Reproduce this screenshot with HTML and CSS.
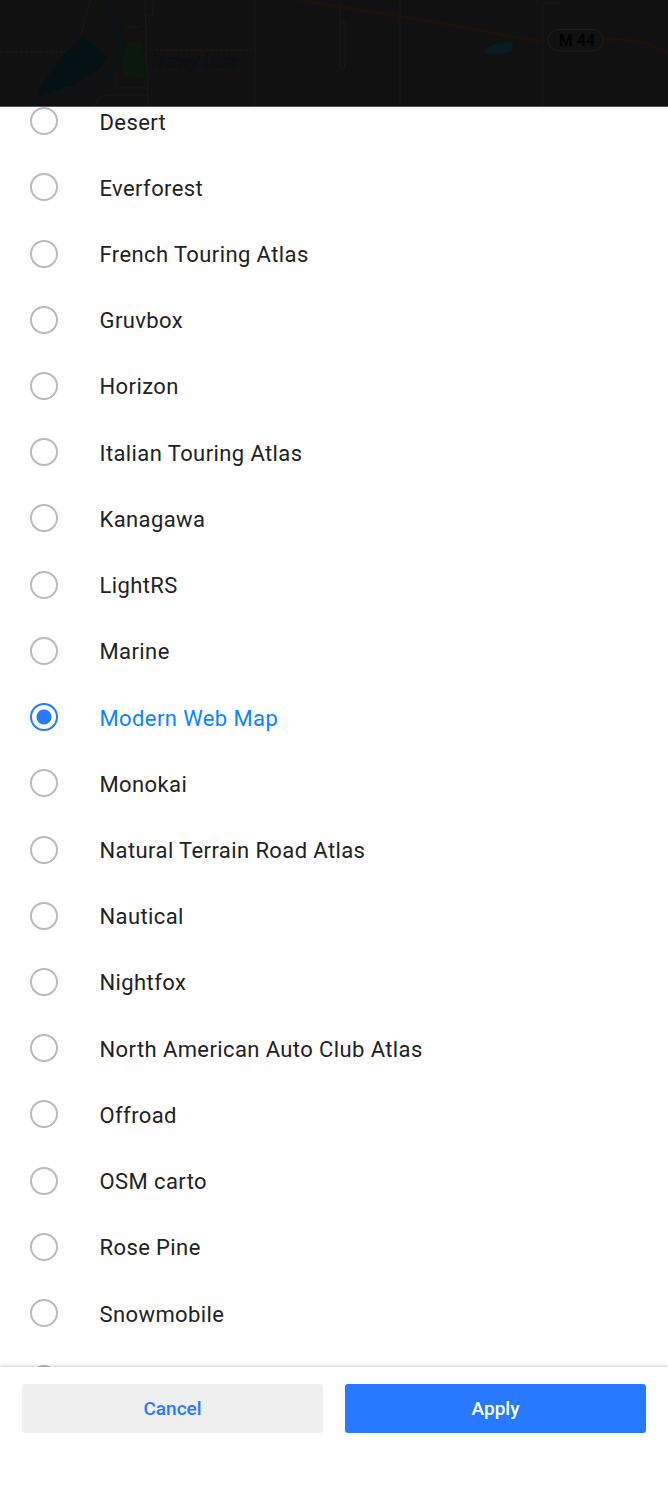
FILE: index.html
```html
<!DOCTYPE html>
<html lang="en">
<head>
  <meta charset="UTF-8" />
  <title>Map style</title>
  <link rel="stylesheet" href="styles.css">
</head>
<body>

<div id="map">
  <svg viewBox="0 0 668 106" width="668" height="106" fill="none">
    <!-- minor roads -->
    <g stroke="#191919" stroke-width="1">
      <path d="M90 0 L82 33"/>
      <path d="M145 0 L148 106"/>
      <path d="M153 0 V15 H143"/>
      <path d="M125 27 H140"/>
      <path d="M115 72 V88 H147"/>
      <path d="M95 106 Q98 95 108 95 H147"/>
      <path d="M255 0 V106"/>
      <path d="M340 0 V22 H345 V60 Q345 70 342 70 Q340 70 340 60 V22"/>
      <path d="M400 0 V106"/>
      <path d="M543 106 V3 H560 V6"/>
    </g>
    <path d="M0 52 H67 M150 50 H257" stroke="#1a1314" stroke-width="2" stroke-dasharray="3 2"/>
    <!-- water and park -->
    <path d="M83 36 L108 57 L100 68 L72 85 L38 97 L40 88 L60 58 Z" fill="#041216"/>
    <path d="M108 0 Q116 25 123 50 Q122 60 113 67 Q100 85 90 92 Q80 92 68 87 L38 100 L33 106" stroke="#06161b" stroke-width="1.500"/>
    <path d="M127 42 H142 L146 80 L122 75 L123 57 Z" fill="#0a190a"/>
    <path d="M483 53 Q488 45 498 43 L513 42 L512 50 Q505 54 497 54 Z" fill="#061c24"/>
    <!-- main road -->
    <path d="M298 0 L440 23 L510 36 L540 41 L603 39 Q625 39 640 42 Q655 46 668 53" stroke="#18120b" stroke-width="3.500"/>
    <text class="map-lake" x="151" y="67">Haney Lake</text>
    <rect x="548" y="29.500" width="55" height="21.500" rx="10.500" fill="#111" stroke="#1c1c1c"/>
    <text class="map-shield" x="577" y="46">M 44</text>
  </svg>
</div>

<div id="sheet">
  <div id="styleList">
    <div class="style-item"><span class="radio"></span><span class="name">Desert</span></div>
    <div class="style-item"><span class="radio"></span><span class="name">Everforest</span></div>
    <div class="style-item"><span class="radio"></span><span class="name">French Touring Atlas</span></div>
    <div class="style-item"><span class="radio"></span><span class="name">Gruvbox</span></div>
    <div class="style-item"><span class="radio"></span><span class="name">Horizon</span></div>
    <div class="style-item"><span class="radio"></span><span class="name">Italian Touring Atlas</span></div>
    <div class="style-item"><span class="radio"></span><span class="name">Kanagawa</span></div>
    <div class="style-item"><span class="radio"></span><span class="name">LightRS</span></div>
    <div class="style-item"><span class="radio"></span><span class="name">Marine</span></div>
    <div class="style-item selected"><span class="radio"></span><span class="name">Modern Web Map</span></div>
    <div class="style-item"><span class="radio"></span><span class="name">Monokai</span></div>
    <div class="style-item"><span class="radio"></span><span class="name">Natural Terrain Road Atlas</span></div>
    <div class="style-item"><span class="radio"></span><span class="name">Nautical</span></div>
    <div class="style-item"><span class="radio"></span><span class="name">Nightfox</span></div>
    <div class="style-item"><span class="radio"></span><span class="name">North American Auto Club Atlas</span></div>
    <div class="style-item"><span class="radio"></span><span class="name">Offroad</span></div>
    <div class="style-item"><span class="radio"></span><span class="name">OSM carto</span></div>
    <div class="style-item"><span class="radio"></span><span class="name">Rose Pine</span></div>
    <div class="style-item"><span class="radio"></span><span class="name">Snowmobile</span></div>
    <div class="style-item"><span class="radio"></span></div>
  </div>
</div>

<div id="footer">
  <button id="cancelBtn">Cancel</button>
  <button id="applyBtn">Apply</button>
</div>

</body>
</html>
```

FILE: styles.css
```css
html, body {
  margin: 0;
  height: 1500px;
}

body {
  display: flex;
  flex-direction: column;
  font-family: Roboto, Arial, sans-serif;
  background-color: #fff;
  overflow: hidden;
}

#map {
  height: 106px;
  flex-shrink: 0;
  background-color: #111;
  border-bottom: 1px solid #555;
}

#map svg {
  display: block;
}

.map-lake {
  font-family: "Open Sans", sans-serif;
  font-size: 17px;
  font-style: italic;
  fill: #0a1519;
  stroke: #0b0b0b;
  stroke-width: 1px;
  paint-order: stroke;
}

.map-shield {
  font-family: Roboto, sans-serif;
  font-size: 16px;
  font-weight: 700;
  fill: #040404;
  text-anchor: middle;
}

#sheet {
  height: 1260px;
  flex-shrink: 0;
  overflow: hidden;
}

#styleList {
  margin-top: -19px;
}

.style-item {
  height: 66.22px;
  padding-left: 30px;
  display: flex;
  align-items: center;
  color: #222;
  font-size: 22px;
  letter-spacing: 0.4px;
}

.radio {
  width: 28px;
  height: 28px;
  box-sizing: border-box;
  border: 2.5px solid #bbb;
  border-radius: 50%;
  margin-right: 41.5px;
  flex-shrink: 0;
}

.name {
  padding-top: 2px;
}

.style-item.selected {
  color: #0a84ff;
}

.style-item.selected .radio {
  border-color: #277aff;
  background: radial-gradient(circle, #277aff 0 7px, #fff 8px);
}

#footer {
  position: relative;
  flex-grow: 1;
  background-color: #fff;
  box-shadow: 0 -1px 3px rgba(0, 0, 0, 0.2);
  padding: 17px 22px 0;
  display: flex;
  gap: 22px;
  align-items: flex-start;
}

#footer button {
  flex: 1;
  height: 49px;
  border: none;
  border-radius: 3px;
  font-family: Roboto, Arial, sans-serif;
  font-size: 19px;
  font-weight: 500;
}

#cancelBtn {
  background-color: #efefef;
  color: #277aff;
}

#applyBtn {
  background-color: #277aff;
  color: #fff;
}
```
